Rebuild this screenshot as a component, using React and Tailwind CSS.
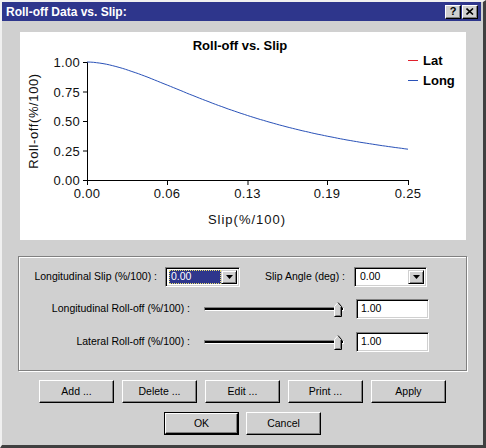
import React from "react";

const FONT = { fontFamily: '"Liberation Sans", Arial, sans-serif' };

// slip curve samples, plotted into the 67..388 x 30..148 box
const curve = (() => {
  const out = [];
  for (let i = 0; i <= 100; i++) {
    const s = (i / 100) * 0.25;
    const v = 1 / (1 + Math.pow(s / 0.139, 1.77));
    const x = 67 + (s / 0.25) * 321;
    const y = 148 - v * 118;
    out.push(`${x.toFixed(1)},${y.toFixed(1)}`);
  }
  return out.join(" ");
})();

const yTicks = [
  { v: "1.00", y: 30 },
  { v: "0.75", y: 59.5 },
  { v: "0.50", y: 89 },
  { v: "0.25", y: 118.5 },
  { v: "0.00", y: 148 },
];
const xTicks = [
  { v: "0.00", x: 67 },
  { v: "0.06", x: 147 },
  { v: "0.13", x: 227.5 },
  { v: "0.19", x: 307 },
  { v: "0.25", x: 388 },
];

function Chart() {
  return (
    <div className="ml-[18px] mt-[11px] h-[208px] w-[446px] bg-white">
      <svg width="446" height="208" style={FONT}>
        <text x="220" y="17.5" textAnchor="middle" fontSize="13" fontWeight="bold" fill="#000">
          Roll-off vs. Slip
        </text>

        {/* legend */}
        <line x1="388" y1="28.5" x2="398" y2="28.5" stroke="#e0202c" strokeWidth="1" />
        <text x="403" y="33" fontSize="13" fontWeight="bold" fill="#000">Lat</text>
        <line x1="388" y1="48.5" x2="398" y2="48.5" stroke="#2a52b8" strokeWidth="1" />
        <text x="403" y="53" fontSize="13" fontWeight="bold" fill="#000">Long</text>

        {/* axes */}
        <line x1="67.5" y1="30" x2="67.5" y2="148.5" stroke="#000" />
        <line x1="67" y1="148.5" x2="388.5" y2="148.5" stroke="#000" />
        {yTicks.map((t) => (
          <g key={t.v}>
            <line x1="63" y1={t.y + 0.5} x2="67" y2={t.y + 0.5} stroke="#000" />
            <text x="60" y={t.y + 5} textAnchor="end" fontSize="13" fontWeight="normal" fill="#111" letterSpacing="0.3">
              {t.v}
            </text>
          </g>
        ))}
        {xTicks.map((t) => (
          <g key={t.v}>
            <line x1={t.x + 0.5} y1="148" x2={t.x + 0.5} y2="153" stroke="#000" />
            <text x={t.x} y="166" textAnchor="middle" fontSize="13" fontWeight="normal" fill="#111" letterSpacing="0.3">
              {t.v}
            </text>
          </g>
        ))}
        <text x="227" y="192" textAnchor="middle" fontSize="13" fontWeight="normal" fill="#111" letterSpacing="1">
          Slip(%/100)
        </text>
        <text
          x="0"
          y="0"
          transform="translate(18 89) rotate(-90)"
          textAnchor="middle"
          fontSize="13"
          fontWeight="normal"
          fill="#111"
          letterSpacing="0.6"
        >
          Roll-off(%/100)
        </text>

        <polyline points={curve} fill="none" stroke="#2a52b8" strokeWidth="1" />
      </svg>
    </div>
  );
}

function DownArrow() {
  return (
    <svg width="7" height="4" viewBox="0 0 7 4">
      <path d="M0 0h7L3.5 4z" fill="#000" />
    </svg>
  );
}

function Combo({ width, value, focused }) {
  return (
    <div
      className={`flex h-[20px] items-stretch border border-t-[#808080] border-l-[#808080] border-b-white border-r-white bg-white shadow-[inset_1px_1px_0_#000,inset_-1px_-1px_0_#d0d0d0] p-[2px] ${width}`}
    >
      <div className="flex flex-1 items-center pl-[1px]">
        {focused ? (
          <div className="flex h-full w-full items-center bg-[#2e368c] pl-[2px] text-white outline-1 outline-dotted outline-[#e8e070] -outline-offset-1">
            {value}
          </div>
        ) : (
          <span className="pl-[2px] text-black">{value}</span>
        )}
      </div>
      <div className="flex w-[16px] items-center justify-center border border-t-[#d0d0d0] border-l-[#d0d0d0] border-b-black border-r-black bg-[#d0d0d0] shadow-[inset_1px_1px_0_#fff,inset_-1px_-1px_0_#808080]">
        <DownArrow />
      </div>
    </div>
  );
}

function TextBox({ value }) {
  return (
    <div className="flex h-[20px] w-[73px] items-center border border-t-[#808080] border-l-[#808080] border-b-white border-r-white bg-white pl-[4px] shadow-[inset_1px_1px_0_#000,inset_-1px_-1px_0_#d0d0d0]">
      {value}
    </div>
  );
}

function Slider() {
  return (
    <div className="relative flex h-[16px] w-[140px] items-center">
      <div className="h-[4px] w-full border border-t-[#808080] border-l-[#808080] border-b-white border-r-white bg-black" />
      <svg className="absolute right-[2px] top-[1px]" width="8" height="15" viewBox="0 0 8 15">
        <path d="M0.5 14.5V4.5L4 0.5L7.5 4.5V14.5Z" fill="#d0d0d0" />
        <path d="M0.5 14V4.5L4 0.5" fill="none" stroke="#fff" />
        <path d="M4 0.5L7.5 4.5V14.5H0.5" fill="none" stroke="#000" />
        <path d="M6.5 5V13.5H1.5" fill="none" stroke="#808080" />
      </svg>
    </div>
  );
}

function Button({ children, isDefault }) {
  const face =
    "flex h-full w-full items-center justify-center border border-t-white border-l-white border-b-black border-r-black bg-[#d0d0d0] shadow-[inset_-1px_-1px_0_#808080]";
  if (isDefault) {
    return (
      <div className="h-[23px] w-[75px] border border-black">
        <div className={face}>{children}</div>
      </div>
    );
  }
  return (
    <div className="h-[23px] w-[75px]">
      <div className={face}>{children}</div>
    </div>
  );
}

function CaptionButton({ children }) {
  return (
    <div className="flex h-[14px] w-[16px] items-center justify-center border border-t-white border-l-white border-b-black border-r-black bg-[#d0d0d0] shadow-[inset_-1px_-1px_0_#808080] text-[11px] font-bold leading-none text-black">
      {children}
    </div>
  );
}

export default function App() {
  return (
    <div
      className="h-[448px] w-[486px] border-l-2 border-t-2 border-r-[3px] border-b-[3px] border-l-[#f0f0f0] border-t-[#f0f0f0] border-r-[#404040] border-b-[#404040] bg-[#d0d0d0] text-[10.5px] text-black"
      style={FONT}
    >
      {/* caption */}
      <div className="mr-[2px] flex h-[19px] items-center justify-between bg-[#2e368c] pl-[4px] pr-[3px]">
        <span className="text-[12px] font-bold text-white">Roll-off Data vs. Slip:</span>
        <div className="flex items-center gap-[1px]">
          <CaptionButton>?</CaptionButton>
          <CaptionButton>
            <svg width="8" height="7" viewBox="0 0 8 7">
              <path d="M0.5 0.5L7 6.5M7 0.5L0.5 6.5" stroke="#000" strokeWidth="1.6" />
            </svg>
          </CaptionButton>
        </div>
      </div>

      <Chart />

      {/* settings group */}
      <div className="ml-[16px] mt-[16px] h-[115px] w-[449px] border border-[#808080] shadow-[inset_1px_1px_0_#fff,1px_1px_0_#fff]">
        <div className="mt-[10px] flex items-center">
          <div className="w-[138px] text-right">Longitudinal Slip (%/100) :</div>
          <div className="ml-[8px]">
            <Combo width="w-[75px]" value="0.00" focused />
          </div>
          <div className="w-[105px] text-right">Slip Angle (deg) :</div>
          <div className="ml-[9px]">
            <Combo width="w-[73px]" value="0.00" />
          </div>
        </div>
        <div className="mt-[12px] flex items-center">
          <div className="w-[171px] text-right">Longitudinal Roll-off (%/100) :</div>
          <div className="ml-[14px]">
            <Slider />
          </div>
          <div className="ml-[12px]">
            <TextBox value="1.00" />
          </div>
        </div>
        <div className="mt-[13px] flex items-center">
          <div className="w-[171px] text-right">Lateral Roll-off (%/100) :</div>
          <div className="ml-[14px]">
            <Slider />
          </div>
          <div className="ml-[12px]">
            <TextBox value="1.00" />
          </div>
        </div>
      </div>

      {/* actions */}
      <div className="ml-[37px] mt-[9px] flex gap-[8px]">
        <Button>Add ...</Button>
        <Button>Delete ...</Button>
        <Button>Edit ...</Button>
        <Button>Print ...</Button>
        <Button>Apply</Button>
      </div>
      <div className="ml-[162px] mt-[9px] flex gap-[7px]">
        <Button isDefault>OK</Button>
        <Button>Cancel</Button>
      </div>
    </div>
  );
}
